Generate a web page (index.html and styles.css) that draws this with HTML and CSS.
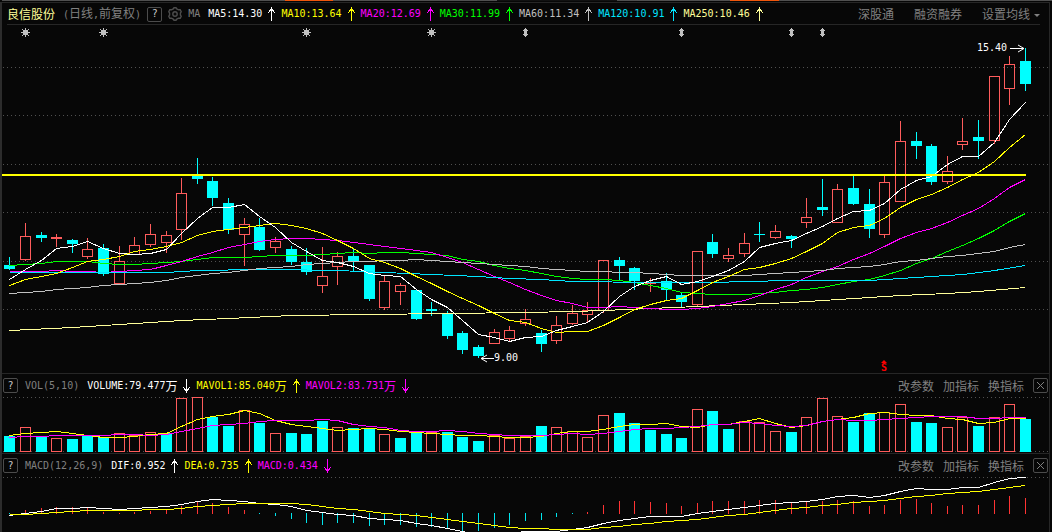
FILE: index.html
```html
<!DOCTYPE html>
<html lang="zh-CN">
<head>
    <meta charset="UTF-8">
    <meta name="viewport" content="width=device-width, initial-scale=1.0">
    <title>良信股份 日线</title>
    <link rel="stylesheet" href="styles.css">
</head>
<body>
    <svg class="defs" aria-hidden="true">
        <symbol id="up" viewBox="0 0 7 14">
            <path d="M3 0h1v14h-1zM2 2h3v2h-3zM1 3h1v2h-1zM5 3h1v2h-1zM0 5h1v1h-1zM6 5h1v1h-1z" fill="currentColor" shape-rendering="crispEdges"/>
        </symbol>
        <symbol id="down" viewBox="0 0 7 14">
            <path d="M3 0h1v14h-1zM2 10h3v2h-3zM1 9h1v2h-1zM5 9h1v2h-1zM0 8h1v1h-1zM6 8h1v1h-1z" fill="currentColor" shape-rendering="crispEdges"/>
        </symbol>
        <symbol id="close" viewBox="0 0 9 9">
            <path d="M1 1L8 8M8 1L1 8" fill="none" stroke="currentColor"/>
        </symbol>
    </svg>

    <div class="tabs">
        <span class="seg w283"></span>
        <span class="seg active w48"></span>
        <span class="seg w164"></span>
        <span class="seg empty w120"></span>
        <span class="seg w113"></span>
        <span class="seg active w49"></span>
        <span class="seg w273"></span>
    </div>

    <main class="terminal">
        <section class="panel">
            <header class="bar bar-main">
                <h1 class="stock">良信股份</h1>
                <span class="period">(<span class="cn">日线</span>,<span class="cn">前复权</span>)</span>
                <button class="box help" type="button" aria-label="帮助">?</button>
                <button class="gear" type="button" aria-label="设置">
                    <svg viewBox="0 0 14 14" width="14" height="14" fill="none" stroke="currentColor">
                        <path stroke-width="1.4" d="M5.2 2L6 .8H8L8.8 2L10.5 2.8L12.2 2.8L13.2 4.8L12.4 6V8L13.2 9.2L12.2 11.2L10.5 11.2L8.8 12L8 13.2H6L5.2 12L3.5 11.2L1.8 11.2L.8 9.2L1.6 8V6L.8 4.8L1.8 2.8L3.5 2.8Z"/>
                        <circle cx="7" cy="7" r="2.2" stroke-width="1.4"/>
                    </svg>
                </button>
                <span class="name">MA</span>
                <div class="values">
                    <span class="white">MA5:14.30<svg class="arrow"><use href="#up"/></svg></span>
                    <span class="yellow">MA10:13.64<svg class="arrow"><use href="#up"/></svg></span>
                    <span class="magenta">MA20:12.69<svg class="arrow"><use href="#up"/></svg></span>
                    <span class="green">MA30:11.99<svg class="arrow"><use href="#up"/></svg></span>
                    <span class="silver">MA60:11.34<svg class="arrow"><use href="#up"/></svg></span>
                    <span class="cyan">MA120:10.91<svg class="arrow"><use href="#up"/></svg></span>
                    <span class="cream">MA250:10.46<svg class="arrow"><use href="#up"/></svg></span>
                </div>
                <div class="links">
                    <button type="button">深股通</button>
                    <button type="button">融资融券</button>
                    <button type="button">设置均线<i class="caret"></i></button>
                </div>
            </header>
            <svg class="chart" id="price" viewBox="2 25 1047 348"></svg>
        </section>

        <section class="panel">
            <header class="bar">
                <button class="box help" type="button" aria-label="帮助">?</button>
                <span class="name">VOL(5,10)</span>
                <div class="values">
                    <span class="white">VOLUME:79.477<span class="cn">万</span><svg class="arrow"><use href="#down"/></svg></span>
                    <span class="yellow">MAVOL1:85.040<span class="cn">万</span><svg class="arrow"><use href="#up"/></svg></span>
                    <span class="magenta">MAVOL2:83.731<span class="cn">万</span><svg class="arrow"><use href="#down"/></svg></span>
                </div>
                <div class="tools">
                    <button type="button">改参数</button>
                    <button type="button">加指标</button>
                    <button type="button">换指标</button>
                    <button class="box" type="button" aria-label="关闭"><svg width="9" height="9"><use href="#close"/></svg></button>
                </div>
            </header>
            <svg class="chart" id="volume" viewBox="2 396 1047 57"></svg>
        </section>

        <section class="panel">
            <header class="bar">
                <button class="box help" type="button" aria-label="帮助">?</button>
                <span class="name">MACD(12,26,9)</span>
                <div class="values">
                    <span class="white">DIF:0.952<svg class="arrow"><use href="#up"/></svg></span>
                    <span class="yellow">DEA:0.735<svg class="arrow"><use href="#up"/></svg></span>
                    <span class="magenta">MACD:0.434<svg class="arrow"><use href="#down"/></svg></span>
                </div>
                <div class="tools">
                    <button type="button">改参数</button>
                    <button type="button">加指标</button>
                    <button type="button">换指标</button>
                    <button class="box" type="button" aria-label="关闭"><svg width="9" height="9"><use href="#close"/></svg></button>
                </div>
            </header>
            <svg class="chart" id="macd" viewBox="2 476 1047 56"></svg>
        </section>
    </main>

    <script src="chart.js"></script>
</body>
</html>
```
FILE: styles.css
```css
* {
    box-sizing: border-box;
}
body {
    margin: 0;
    background-color: #070707;
    color: #808080;
    font-family: "DejaVu Sans Mono", "Noto Sans CJK SC", monospace;
    font-size: 10px;
    line-height: 14px;
    overflow: hidden;
}
button {
    padding: 0;
    border: 0;
    background: none;
    color: inherit;
    font: inherit;
    cursor: pointer;
}
button:hover {
    color: #ccc;
}
.defs {
    display: none;
}

/* edge of the tab strip above the chart */
.tabs {
    display: flex;
    height: 1px;
    margin: 0 0 1px 2px;
}
.seg {
    background-color: #505050;
}
.seg.active {
    background-color: #f0560c;
}
.seg.empty {
    background-color: #111;
}
.w283 { flex: 283; }
.w48 { flex: 48; }
.w164 { flex: 164; }
.w120 { flex: 120; }
.w113 { flex: 113; }
.w49 { flex: 49; }
.w273 { flex: 273; }

.terminal {
    margin-right: 2px;
    border-left: 2px solid #2c2c2c;
    border-right: 1px solid #262626;
}
.panel {
    border-top: 1px solid #262626;
}
.chart {
    display: block;
    width: 100%;
    height: auto;
}

.bar {
    display: flex;
    align-items: center;
    height: 22px;
    padding: 1px 1px 0;
    white-space: nowrap;
}
.bar-main {
    margin: 0 9px 0 5px;
    padding: 1px 0 0;
    border-bottom: 1px solid #262626;
}
.stock {
    margin: 0 8px 0 0;
    color: #ffff99;
    font-family: "Noto Sans CJK SC", sans-serif;
    font-size: 12px;
    font-weight: normal;
}
.cn, .links, .tools {
    font-family: "Noto Sans CJK SC", sans-serif;
    font-size: 12px;
}
.period {
    margin-right: 6px;
}
.box {
    display: flex;
    align-items: center;
    justify-content: center;
    width: 15px;
    height: 15px;
    border: 1px solid #4c4c4c;
    border-radius: 2px;
}
.help {
    margin-right: 7px;
    color: #c8c8c8;
}
.bar-main .help {
    margin-right: 6px;
}
.gear {
    display: flex;
    margin-right: 6px;
    color: #4c4c4c;
}
.name {
    margin-right: 8px;
}
.values {
    display: flex;
}
.values > span {
    display: flex;
    align-items: center;
}
.arrow {
    width: 7px;
    height: 14px;
    margin: 0 6px;
}
.links, .tools {
    display: flex;
    align-items: center;
    margin-left: auto;
}
.links {
    gap: 20px;
}
.tools {
    gap: 9px;
}
.caret {
    display: inline-block;
    margin-left: 4px;
    border: 3px solid transparent;
    border-top-color: #808080;
    border-bottom: 0;
    vertical-align: middle;
}

.white { color: #fff; }
.yellow { color: #ff0; }
.magenta { color: #f0f; }
.green { color: #0f0; }
.silver { color: #c0c0c0; }
.cyan { color: #00e5ff; }
.cream { color: #ffff99; }

/* chart shapes */
.line {
    fill: none;
    stroke: currentColor;
    shape-rendering: crispEdges;
}
.grid {
    stroke: #505050;
    stroke-dasharray: 1 3;
    shape-rendering: crispEdges;
}
.up-bar {
    fill: none;
    stroke: #ff5c5c;
    shape-rendering: crispEdges;
}
.down-bar {
    fill: #0ff;
    shape-rendering: crispEdges;
}
.up-wick {
    fill: #ff5c5c;
    shape-rendering: crispEdges;
}
.hist-up {
    fill: #f33;
    shape-rendering: crispEdges;
}
.hist-down {
    fill: #00e5ee;
    shape-rendering: crispEdges;
}
.level {
    fill: #ff0;
}
.marker {
    fill: #c0c0c0;
    shape-rendering: crispEdges;
}
.label {
    fill: #fff;
    font-size: 10px;
}
.pointer {
    fill: none;
    stroke: #fff;
}
.dividend {
    fill: #f00;
    font-size: 10px;
    font-weight: bold;
    text-anchor: middle;
}
```
FILE: chart.js
```js
const NS = 'http://www.w3.org/2000/svg';
const price = document.getElementById('price');
const volume = document.getElementById('volume');
const macd = document.getElementById('macd');

function draw(parent, tag, attrs, text) {
    const el = document.createElementNS(NS, tag);
    for (const key in attrs) el.setAttribute(key, attrs[key]);
    if (text) el.textContent = text;
    parent.appendChild(el);
    return el;
}

// centre column of candle i
function cx(i) {
    return Math.floor(9.8 + i * 15.625);
}

function rect(parent, cls, x, top, width, bottom) {
    if (bottom > top) draw(parent, 'rect', { class: cls, x: x, y: top, width: width, height: bottom - top });
}

function bar(parent, i, dir, top, bottom) {
    if (dir === 'u') {
        draw(parent, 'rect', { class: 'up-bar', x: cx(i) - 4.5, y: top + 0.5, width: 10, height: bottom - top - 1 });
    } else {
        rect(parent, 'down-bar', cx(i) - 5, top, 11, bottom);
    }
}

function grid(parent, y) {
    draw(parent, 'line', { class: 'grid', x1: 3, x2: 1049, y1: y + 0.5, y2: y + 0.5 });
}

function line(parent, color, ys) {
    const points = ys.map((y, i) => (cx(i) + 0.5) + ',' + (y + 0.5));
    draw(parent, 'polyline', { class: 'line ' + color, points: points.join(' ') });
}

function path(parent, color, pairs) {
    const points = pairs.map(p => (p[0] + 0.5) + ',' + (p[1] + 0.5));
    draw(parent, 'polyline', { class: 'line ' + color, points: points.join(' ') });
}

// direction, high, body top, body bottom, low
const candles = [
    ['d', 257, 265, 269, 270], ['u', 223, 236, 260, 261], ['d', 232, 235, 238, 242], ['u', 234, 237, 239, 247],
    ['d', 239, 240, 244, 253], ['u', 238, 249, 257, 259], ['d', 244, 248, 274, 276], ['u', 246, 261, 284, 284],
    ['u', 237, 245, 255, 255], ['u', 224, 234, 245, 247], ['u', 231, 235, 243, 253], ['u', 178, 193, 230, 240],
    ['d', 158, 175, 179, 184], ['d', 177, 181, 198, 206], ['d', 198, 203, 230, 234], ['u', 218, 224, 235, 266],
    ['d', 218, 227, 250, 251], ['u', 237, 241, 248, 253], ['d', 246, 249, 262, 265], ['d', 248, 262, 272, 275],
    ['u', 247, 276, 286, 293], ['u', 252, 256, 267, 285], ['d', 249, 256, 262, 271], ['d', 265, 265, 299, 301],
    ['u', 276, 281, 308, 310], ['u', 283, 285, 292, 305], ['d', 290, 290, 319, 320], ['d', 302, 309, 311, 316],
    ['d', 311, 313, 336, 339], ['d', 331, 333, 350, 354], ['d', 345, 347, 356, 358], ['u', 329, 332, 344, 344],
    ['u', 326, 330, 339, 341], ['u', 309, 319, 324, 326], ['d', 330, 333, 344, 352], ['u', 316, 325, 341, 344],
    ['u', 305, 313, 324, 325], ['u', 302, 310, 315, 322], ['u', 260, 260, 311, 313], ['d', 257, 260, 266, 281],
    ['d', 267, 268, 281, 290], ['u', 278, 283, 284, 292], ['d', 273, 281, 290, 300], ['d', 292, 295, 302, 307],
    ['u', 251, 251, 305, 307], ['d', 234, 242, 254, 258], ['u', 248, 255, 259, 262], ['u', 233, 243, 254, 257],
    ['d', 222, 234, 235, 242], ['u', 225, 231, 238, 239], ['d', 235, 236, 239, 248], ['u', 198, 217, 223, 228],
    ['d', 179, 207, 210, 216], ['u', 184, 189, 223, 223], ['d', 175, 188, 204, 205], ['d', 189, 204, 229, 238],
    ['u', 175, 182, 235, 238], ['u', 121, 141, 202, 202], ['d', 132, 141, 146, 159], ['d', 144, 146, 182, 185],
    ['u', 156, 171, 182, 184], ['u', 118, 141, 145, 150], ['d', 120, 137, 141, 159], ['u', 76, 76, 141, 144],
    ['u', 56, 64, 89, 105], ['d', 48, 61, 84, 91]
];

const ma5 = [279, 269, 260, 248, 246, 241, 248, 253, 254, 253, 249, 233, 218, 207, 207, 204, 216, 227, 242, 251, 260, 262,
    266, 273, 275, 276, 289, 299, 307, 320, 334, 337, 341, 337, 336, 330, 326, 322, 311, 296, 286, 280, 276, 284,
    281, 276, 270, 261, 247, 243, 240, 233, 226, 218, 211, 210, 203, 189, 180, 176, 164, 156, 156, 142, 119, 102];
const ma10 = [285, 279, 276, 273, 267, 261, 259, 256, 251, 249, 246, 242, 235, 231, 229, 227, 225, 223, 225, 228, 233, 240,
    248, 258, 262, 268, 276, 283, 291, 298, 305, 313, 320, 322, 328, 332, 331, 331, 325, 317, 309, 304, 300, 298,
    290, 282, 276, 269, 267, 263, 258, 251, 243, 232, 227, 225, 218, 207, 199, 194, 187, 179, 172, 161, 147, 134];
const ma20 = [271, 271, 271, 270, 271, 271, 272, 271, 270, 269, 265, 261, 256, 252, 247, 244, 241, 239, 238, 238, 239, 240,
    242, 244, 246, 248, 250, 252, 257, 262, 269, 276, 282, 289, 295, 300, 303, 307, 307, 306, 307, 308, 309, 309,
    308, 306, 303, 300, 295, 289, 284, 277, 271, 266, 259, 253, 246, 238, 232, 228, 222, 215, 208, 198, 187, 179];
const ma30 = [265, 264, 263, 261, 261, 261, 263, 264, 264, 263, 262, 261, 259, 257, 257, 257, 256, 255, 255, 255, 254, 253,
    252, 253, 252, 252, 253, 254, 255, 259, 261, 265, 268, 270, 273, 276, 278, 279, 279, 280, 282, 285, 288, 292,
    293, 294, 294, 294, 293, 292, 290, 289, 287, 284, 281, 279, 275, 270, 263, 258, 251, 245, 238, 230, 221, 213];
const ma60 = [293, 292, 291, 289, 288, 287, 285, 284, 283, 282, 280, 277, 275, 273, 272, 270, 268, 267, 266, 264, 263, 262,
    261, 261, 260, 260, 259, 260, 261, 262, 263, 264, 265, 266, 268, 269, 270, 271, 271, 272, 272, 273, 274, 275,
    275, 275, 275, 275, 274, 273, 272, 271, 270, 268, 267, 266, 264, 261, 260, 258, 256, 255, 253, 251, 247, 244];
const ma120 = [[9, 272], [166, 272], [197, 270], [259, 269], [275, 269], [337, 270], [384, 272], [431, 274], [478, 276],
    [509, 278], [541, 279], [572, 281], [650, 282], [713, 282], [744, 281], [791, 280], [869, 280], [900, 278],
    [931, 276], [963, 274], [994, 270], [1025, 265]];
const ma250 = [[9, 330], [72, 327], [119, 324], [181, 320], [228, 318], [291, 315], [369, 314], [447, 313], [525, 312],
    [572, 311], [603, 310], [650, 308], [697, 306], [744, 304], [791, 302], [838, 299], [900, 295], [947, 293],
    [978, 291], [1025, 287]];

[67, 115, 164, 212, 261, 309].forEach(y => grid(price, y));

candles.forEach(([dir, high, top, bottom, low], i) => {
    const wick = dir === 'u' ? 'up-wick' : 'down-bar';
    rect(price, wick, cx(i), high, 1, top);
    rect(price, wick, cx(i), bottom, 1, low);
    if (bottom - top === 1) {
        rect(price, wick, cx(i) - 5, top, 11, bottom);
    } else {
        bar(price, i, dir, top, bottom);
    }
});

path(price, 'cream', ma250);
line(price, 'green', ma30);
line(price, 'magenta', ma20);
path(price, 'cyan', ma120);
line(price, 'silver', ma60);
line(price, 'yellow', ma10);
line(price, 'white', ma5);
draw(price, 'rect', { class: 'level', x: 2, y: 174, width: 1024, height: 2 });

// event markers under the title bar
[25, 103, 306, 431].forEach(x => {
    draw(price, 'path', {
        class: 'marker',
        transform: `translate(${x - 4} 28)`,
        d: 'M2 2h5v5h-5zM4 0h1v9h-1zM0 4h9v1h-9zM1 1h1v1h-1zM7 1h1v1h-1zM1 7h1v1h-1zM7 7h1v1h-1z'
    });
});
[525, 681, 791, 822].forEach(x => {
    draw(price, 'path', {
        class: 'marker',
        transform: `translate(${x - 2} 28)`,
        d: 'M2 0h1v9h-1zM1 1h3v7h-3zM0 2h5v1h-5zM0 6h5v1h-5z'
    });
});

draw(price, 'text', { class: 'label', x: 977, y: 51 }, '15.40');
draw(price, 'path', { class: 'pointer', d: 'M1010 48.5H1024M1018 45L1024 48.5L1018 52' });
draw(price, 'text', { class: 'label', x: 494, y: 361 }, '9.00');
draw(price, 'path', { class: 'pointer', d: 'M494 358.5H481M487 355L481 358.5L487 362' });
draw(price, 'text', { class: 'dividend', x: 884, y: 371 }, 'S');
draw(price, 'path', { class: 'dividend', d: 'M881 363L884 360L887 363Z' });

// volume bars: direction + top
const volumes = ('d436 u427 d437 u438 d439 d435 d437 u433 u435 u432 d433 u398 u397 d417 d426 u410 d423 u433 d433 d434 ' +
    'd421 u427 d428 d429 u434 d438 d433 u432 d432 d437 d441 u435 u438 u436 d426 u427 u431 u437 u415 d413 d423 d430 ' +
    'd434 d438 u409 d411 d429 u421 u422 u431 d432 u417 u398 u416 d422 d413 u412 u404 d422 d423 u427 u417 d426 u417 ' +
    'u404 d419').split(' ');
const mavol1 = [435, 433, 432, 431, 433, 435, 437, 437, 436, 434, 433, 426, 419, 416, 414, 410, 413, 420, 424, 426, 428, 430,
    429, 428, 429, 431, 432, 433, 434, 435, 435, 436, 437, 437, 436, 433, 431, 431, 429, 426, 424, 424, 423, 426,
    427, 424, 424, 421, 418, 423, 427, 425, 421, 419, 417, 413, 412, 414, 415, 415, 418, 419, 423, 422, 418, 418];
const mavol2 = [437, 436, 436, 435, 435, 435, 435, 434, 434, 435, 434, 431, 428, 425, 424, 423, 421, 420, 420, 420, 419, 420,
    424, 426, 427, 430, 431, 431, 430, 431, 433, 434, 435, 435, 435, 434, 433, 434, 433, 431, 429, 428, 428, 427,
    426, 424, 424, 422, 423, 425, 426, 425, 421, 419, 420, 420, 419, 418, 417, 416, 416, 416, 418, 418, 417, 417];

grid(volume, 397);
grid(volume, 451);
volumes.forEach((v, i) => bar(volume, i, v[0], Number(v.slice(1)), 452));
line(volume, 'yellow', mavol1);
line(volume, 'magenta', mavol2);

// macd histogram: end of each stick, below or above the zero row
const sticks = [514, 510, 508, 507, 507, 508, 512, 513, 512, 511, 509, 506, 502, 503, 507, 510, 514, 516, 519, 523, 525, 523,
    523, 526, 525, 525, 527, 527, 529, 531, 531, 528, 525, 521, 520, 517, 514, 512, 505, 501, 501, 502, 503, 506,
    503, 501, 501, 501, 500, 500, 502, 501, 501, 500, 501, 506, 505, 500, 499, 503, 506, 505, 505, 500, 496, 498];
const dif = [515, 513, 511, 508, 508, 507, 508, 509, 508, 507, 506, 504, 501, 499, 500, 501, 503, 504, 506, 510, 512, 514,
    515, 518, 519, 520, 523, 525, 528, 531, 534, 535, 533, 531, 531, 531, 529, 527, 523, 520, 518, 516, 516, 516,
    513, 511, 509, 507, 505, 503, 502, 501, 499, 496, 495, 497, 495, 491, 488, 489, 489, 487, 487, 482, 478, 477];
const dea = [514, 514, 513, 512, 511, 510, 510, 510, 510, 509, 509, 508, 506, 505, 504, 503, 503, 503, 503, 504, 506, 508,
    509, 511, 513, 514, 515, 517, 519, 521, 523, 525, 527, 528, 528, 529, 529, 529, 527, 526, 524, 523, 521, 520,
    519, 517, 515, 514, 512, 510, 508, 507, 505, 504, 502, 501, 500, 498, 496, 495, 493, 492, 491, 489, 487, 485];

grid(macd, 477);
sticks.forEach((y, i) => {
    if (y > 513) {
        rect(macd, 'hist-down', cx(i), 513, 1, y);
    } else {
        rect(macd, 'hist-up', cx(i), y, 1, 514);
    }
});
line(macd, 'white', dif);
line(macd, 'yellow', dea);
```
